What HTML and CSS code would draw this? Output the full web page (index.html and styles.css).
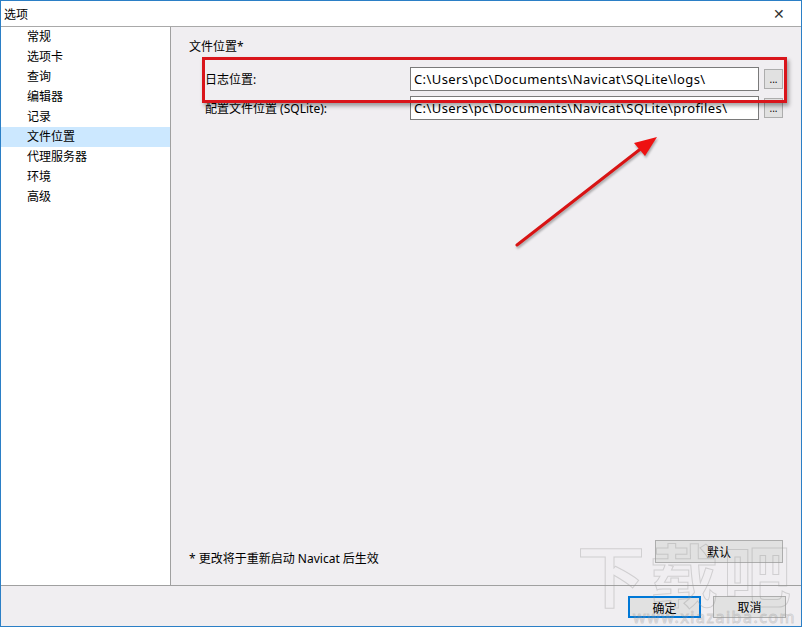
FILE: index.html
```html
<!doctype html>
<html><head><meta charset="UTF-8"><link rel="stylesheet" href="styles.css"></head>
<body>
  <div class="fenetre">
    <div class="titre"><span>选项</span><span class="fermer">✕</span></div>
    <div class="corps">
      <ul class="menu">
        <li>常规</li>
        <li>选项卡</li>
        <li>查询</li>
        <li>编辑器</li>
        <li>记录</li>
        <li class="actif">文件位置</li>
        <li>代理服务器</li>
        <li>环境</li>
        <li>高级</li>
      </ul>
      <div class="contenu">
        <div class="groupe">文件位置*</div>
        <div class="ligne">
          <label for="logs">日志位置:</label>
          <input type="text" id="logs" value="C:\Users\pc\Documents\Navicat\SQLite\logs\">
          <button class="parcourir">...</button>
        </div>
        <div class="ligne">
          <label for="profiles">配置文件位置 (SQLite):</label>
          <input type="text" id="profiles" value="C:\Users\pc\Documents\Navicat\SQLite\profiles\">
          <button class="parcourir">...</button>
        </div>
        <div class="bas">
          <span>* 更改将于重新启动 Navicat 后生效</span>
          <button class="defaut">默认</button>
        </div>
      </div>
    </div>
    <div class="pied">
      <button class="ok">确定</button>
      <button>取消</button>
    </div>
    <div class="cadre"></div>
    <svg class="fleche" width="802" height="627" viewBox="0 0 802 627">
      <line x1="517" y1="245" x2="643" y2="147" stroke="#d81414" stroke-width="3" stroke-linecap="round"/>
      <polygon points="657,137 634,143 645,156" fill="#ee1111"/>
    </svg>
    <div class="filigrane"><div class="gros">下载吧</div><div class="url">www.xiazaiba.com</div></div>
  </div>
</body></html>
```

FILE: styles.css
```css
* {box-sizing: border-box;}
body {margin:0;font-family:"Noto Sans","Noto Sans CJK SC",sans-serif;font-size:12px;color:#000;}
.fenetre {position:relative;width:802px;height:627px;border:1px solid #2b7fc6;background:#f0eef1;display:flex;flex-direction:column;overflow:hidden;}
.titre {height:26px;background:#fff;border-bottom:1px solid #a9a9a9;display:flex;justify-content:space-between;align-items:center;padding:0 0 0 3px;font-size:12px;}
.fermer {width:44px;text-align:center;font-size:14px;font-weight:300;color:#333;}
.corps {height:559px;display:flex;border-bottom:1px solid #a0a0a0;}
.menu {list-style:none;margin:0;padding:0;width:170px;background:#fff;border-right:1px solid #a0a0a0;}
.menu li {height:20px;line-height:20px;padding-left:26px;}
.menu li.actif {background:#cce8ff;}
.contenu {flex:1;padding:10px 18px 0 18px;display:flex;flex-direction:column;}
.groupe {height:20px;line-height:20px;margin-bottom:10px;}
.ligne {display:flex;align-items:center;height:24px;margin-bottom:5px;padding-left:16px;}
.ligne label {width:205px;}
.ligne input {width:349px;height:24px;border:1px solid #7a7a7a;background:#fff;font:inherit;font-size:13px;letter-spacing:0.4px;padding:0 3px;}
.parcourir {margin-left:5px;width:19px;height:20px;border:1px solid #adadad;background:#e1e1e1;font:inherit;font-size:10px;padding:0;line-height:12px;}
.bas {margin-top:auto;height:46px;display:flex;justify-content:space-between;align-items:flex-start;padding-top:1px;}
.bas span {line-height:20px;margin-top:9px;}
.defaut {width:128px;height:23px;border:1px solid #adadad;background:#e1e1e1;font:inherit;margin-right:0;}
.pied {flex:1;display:flex;justify-content:flex-end;align-items:center;gap:12px;padding-right:15px;padding-top:1px;}
.pied button {width:73px;height:22px;border:1px solid #adadad;background:#e1e1e1;font:inherit;}
.pied button.ok {border:2px solid #0078d7;}
.cadre {position:absolute;left:201px;top:56px;width:585px;height:46px;border:3px solid #d9151b;box-shadow:2px 3px 4px rgba(0,0,0,0.35);}
.fleche {position:absolute;left:-1px;top:-1px;pointer-events:none;filter:drop-shadow(1px 2px 1px rgba(0,0,0,0.3));}
.filigrane {position:absolute;right:5px;bottom:1px;text-align:right;color:transparent;-webkit-text-stroke:1px rgba(150,150,150,0.35);pointer-events:none;}
.filigrane .gros {font-size:68px;font-weight:bold;line-height:66px;letter-spacing:5px;}
.filigrane .url {font-size:16px;line-height:16px;letter-spacing:1.5px;}
```
